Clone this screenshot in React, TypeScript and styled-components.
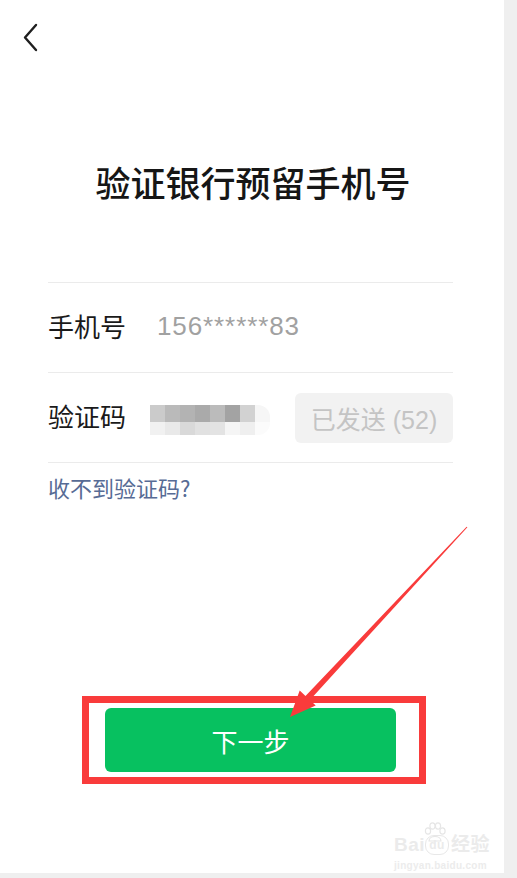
import * as React from 'react';
import styled, { createGlobalStyle } from 'styled-components';

const GlobalStyle = createGlobalStyle`
  html, body {
    margin: 0;
    padding: 0;
    background: #efefef;
  }
  body {
    font-family: "Liberation Sans", "Noto Sans CJK SC", sans-serif;
  }
`;

// pixelated code, two rows of grey blocks
const mosaicRows = [
  ['#cbcbcb', '#bababa', '#b3b3b3', '#aaaaaa', '#bbbbbb', '#a3a3a3', '#d2d2d2', '#f6f6f6'],
  ['#f1f1f1', '#e9e9e9', '#d9d9d9', '#e1e1e1', '#e3e3e3', '#f5f5f5', '#efefef', '#fbfbfb'],
];

const App = () => {
  return <>
    <GlobalStyle />
    <Page>
      <Header>
        <BackIcon viewBox="0 0 16 30" width="16" height="30">
          <path d="M13 2 L2 14.5 L13 27" fill="none" stroke="#1f1f1f" strokeWidth="2.4" strokeLinecap="round" strokeLinejoin="round" />
        </BackIcon>
      </Header>

      <Title>验证银行预留手机号</Title>

      <Form>
        <Row>
          <Label>手机号</Label>
          <Value>156******83</Value>
        </Row>
        <Row>
          <Label>验证码</Label>
          <Mosaic>
            {mosaicRows.map((row, r) =>
              row.map((shade, c) => <MosaicCell key={`${r}-${c}`} $shade={shade} />)
            )}
          </Mosaic>
          <SendButton>已发送 (52)</SendButton>
        </Row>
        <HelpLink>收不到验证码?</HelpLink>
      </Form>

      <Highlight>
        <NextButton>下一步</NextButton>
      </Highlight>

      <ArrowLayer viewBox="0 0 504 873" width="504" height="873">
        <polygon
          fill="#f93b3b"
          points="467.4,527.3 466.6,526.7 305.5,696 299.7,690.5 290,717 315.7,705.5 309.9,700"
        />
      </ArrowLayer>

      <Watermark>
        <WatermarkLogo>
          Bai
          <Paw viewBox="0 0 24 22" width="24" height="22">
            <g fill="none" stroke="#e6e6e6" strokeWidth="1.2">
              <ellipse cx="5" cy="9" rx="2.6" ry="3.2" />
              <ellipse cx="9.5" cy="4" rx="2.6" ry="3.2" />
              <ellipse cx="15" cy="4" rx="2.6" ry="3.2" />
              <ellipse cx="19.5" cy="9" rx="2.6" ry="3.2" />
              <path d="M6 19 C6 13 18 13 18 19 Z" />
            </g>
          </Paw>
          <DuBadge>du</DuBadge>
          经验
        </WatermarkLogo>
        <WatermarkUrl>jingyan.baidu.com</WatermarkUrl>
      </Watermark>
    </Page>
  </>;
};

const Page = styled.div`
  position: relative;
  width: 504px;
  height: 873px;
  background: #ffffff;
  display: flex;
  flex-direction: column;
  overflow: hidden;
`;

const Header = styled.div`
  height: 76px;
  display: flex;
  align-items: center;
  padding-left: 23px;
`;

const BackIcon = styled.svg`
  display: block;
  margin-top: -1px;
`;

const Title = styled.h1`
  margin: 82px 0 0 0;
  font-family: "Noto Sans CJK SC", sans-serif;
  font-size: 35px;
  line-height: 48px;
  font-weight: 500;
  color: #161616;
  text-align: center;
  padding-left: 2px;
`;

const Form = styled.div`
  margin: 76px 51px 0 48px;
  border-top: 1px solid #ebebeb;
`;

const Row = styled.div`
  height: 89px;
  display: flex;
  align-items: center;
  border-bottom: 1px solid #ebebeb;
`;

const Label = styled.div`
  width: 109px;
  flex-shrink: 0;
  font-family: "Noto Sans CJK SC", sans-serif;
  font-size: 26px;
  color: #1a1a1a;
  line-height: 1;
  margin-top: -3px;
`;

const Value = styled.div`
  font-size: 26px;
  letter-spacing: 0.9px;
  color: #a1a1a1;
  margin-top: -2px;
`;

const Mosaic = styled.div`
  display: grid;
  grid-template-columns: repeat(8, 15px);
  grid-template-rows: 17px 13px;
  margin-left: -7px;
  margin-top: 4px;
  border-radius: 0 12px 12px 0;
  overflow: hidden;
`;

const MosaicCell = styled.div<{ $shade: string }>`
  background: ${props => props.$shade};
`;

const SendButton = styled.div`
  margin-left: auto;
  width: 158px;
  height: 50px;
  border-radius: 6px;
  background: #f2f2f2;
  color: #c4c4c4;
  font-size: 25px;
  display: flex;
  align-items: center;
  justify-content: center;
`;

const HelpLink = styled.div`
  margin-top: 9px;
  line-height: 30px;
  font-family: "Noto Sans CJK SC", sans-serif;
  font-size: 22px;
  color: #576b95;
`;

const Highlight = styled.div`
  align-self: flex-start;
  margin: 194px 0 0 82px;
  width: 344px;
  box-sizing: border-box;
  border: 7px solid #f93b3b;
  padding: 5px 23px 5px 16px;
`;

const NextButton = styled.div`
  height: 64px;
  border-radius: 6px;
  background: #07c160;
  color: #ffffff;
  font-family: "Noto Sans CJK SC", sans-serif;
  font-size: 26px;
  display: flex;
  align-items: center;
  justify-content: center;
`;

const ArrowLayer = styled.svg`
  position: absolute;
  left: 0;
  top: 0;
  pointer-events: none;
`;

const Watermark = styled.div`
  position: absolute;
  left: 394px;
  top: 822px;
  display: flex;
  flex-direction: column;
  align-items: flex-start;
  color: #ebebeb;
`;

const WatermarkLogo = styled.div`
  display: flex;
  align-items: flex-end;
  font-family: "Liberation Sans", "Noto Sans CJK SC", sans-serif;
  font-size: 19px;
  font-weight: 700;
  line-height: 26px;
  letter-spacing: 0.5px;
`;

const Paw = styled.svg`
  display: block;
  margin: 0 -22px 14px -2px;
`;

const DuBadge = styled.span`
  display: inline-flex;
  align-items: center;
  justify-content: center;
  width: 22px;
  height: 18px;
  margin: 0 2px 3px 0;
  border-radius: 9px;
  border: 1.5px solid #e8e8e8;
  font-size: 12px;
  line-height: 1;
`;

const WatermarkUrl = styled.div`
  font-size: 10px;
  font-weight: 700;
  color: #ececec;
  margin-top: 2px;
  letter-spacing: 0.3px;
`;

export default App;
